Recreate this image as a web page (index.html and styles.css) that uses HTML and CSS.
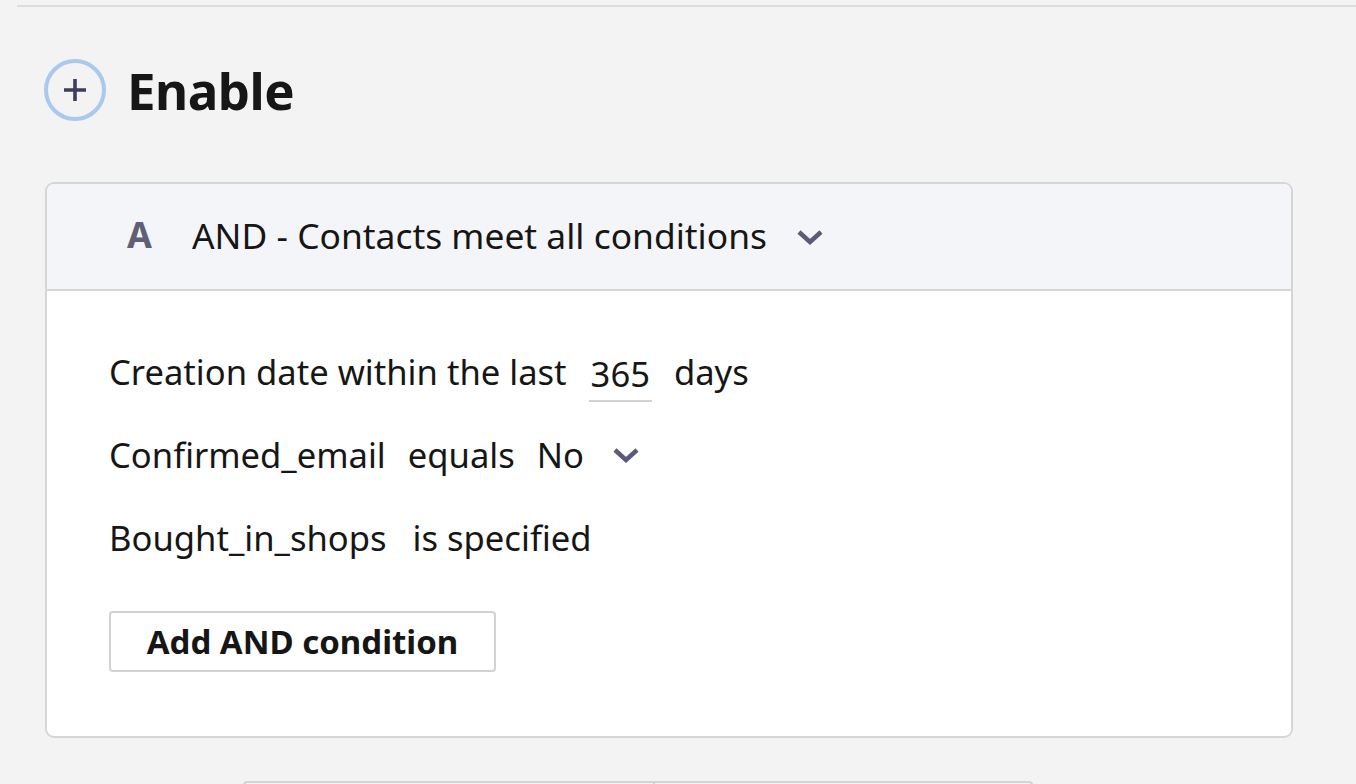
FILE: index.html
```html
<!DOCTYPE html>
<html>
<head>
<meta charset="utf-8">
<link rel="stylesheet" href="styles.css">
</head>
<body>
<div class="page">
  <div class="topline"></div>
  <div class="enable">
    <div class="plus-circle">
      <svg width="26" height="26" viewBox="0 0 26 26"><path d="M13 2v22M2 13h22" stroke="#3d3d5e" stroke-width="3.6" fill="none"/></svg>
    </div>
    <h1 class="enable-title">Enable</h1>
  </div>
  <div class="card">
    <div class="card-header">
      <span class="letter">A</span>
      <span class="header-text">AND - Contacts meet all conditions</span>
      <svg class="chev" width="28" height="16" viewBox="0 0 28 16"><path d="M3 3l11 10 11-10" stroke="#5b5a7a" stroke-width="4.5" fill="none"/></svg>
    </div>
    <div class="card-body">
      <div class="row">
        <span>Creation date within the last</span>
        <span class="num">365</span>
        <span>days</span>
      </div>
      <div class="row">
        <span>Confirmed_email</span>
        <span>equals</span>
        <span>No</span>
        <svg class="chev small" width="28" height="16" viewBox="0 0 28 16"><path d="M3 3l11 10 11-10" stroke="#5b5a7a" stroke-width="4.5" fill="none"/></svg>
      </div>
      <div class="row">
        <span>Bought_in_shops</span>
        <span class="spec">is specified</span>
      </div>
      <button class="add-btn">Add AND condition</button>
    </div>
  </div>
  <div class="bottom-btns">
    <div class="bbtn"></div>
    <div class="bbtn right"></div>
  </div>
</div>
</body>
</html>
```
FILE: styles.css
```css
html, body {
  margin: 0;
  padding: 0;
  background: #f3f3f3;
  font-family: "Noto Sans", "Open Sans", sans-serif;
  color: #161616;
  overflow: hidden;
  height: 784px;
}
.page {
  padding-top: 5px;
}
.topline {
  margin-left: 17px;
  height: 2px;
  background: #dddddd;
}
.enable {
  display: flex;
  align-items: center;
  margin: 52px 0 0 44px;
  height: 62px;
}
.plus-circle {
  width: 54px;
  height: 54px;
  border: 4px solid #a9c9ee;
  border-radius: 50%;
  display: flex;
  align-items: center;
  justify-content: center;
}
.enable-title {
  margin: 0 0 0 21px;
  font-size: 51px;
  font-weight: 700;
  line-height: 62px;
  letter-spacing: -0.5px;
}
.card {
  margin: 61px 0 0 45px;
  width: 1244px;
  height: 552px;
  border: 2px solid #d6d6d6;
  border-radius: 9px;
  background: #ffffff;
  overflow: hidden;
}
.card-header {
  height: 105px;
  background: #f4f5f8;
  border-bottom: 2px solid #d6d6d6;
  display: flex;
  align-items: center;
  padding-left: 80px;
}
.letter {
  font-size: 36px;
  font-weight: 700;
  color: #5f6075;
  width: 65px;
  margin-bottom: 4px;
}
.header-text {
  font-size: 35.4px;
  font-weight: 400;
  color: #161616;
  margin-bottom: 4px;
}
.chev {
  margin-left: 29px;
  margin-top: 0;
}
.card-body {
  padding: 39px 0 0 62px;
}
.row {
  display: flex;
  align-items: center;
  gap: 22px;
  height: 83px;
  font-size: 34.6px;
  margin-top: -16px;
  margin-bottom: 16px;
}
.row:first-child {
  margin-top: 0;
}
.num {
  border-bottom: 2px solid #d2d2d2;
  padding: 0 2px 3px;
  margin-top: 8px;
}
.spec {
  margin-left: 4px;
}
.chev.small {
  margin-left: 6px;
}
.add-btn {
  margin-top: 16px;
  width: 387px;
  height: 61px;
  border: 2px solid #d2d2d2;
  border-radius: 4px;
  background: #ffffff;
  font-family: inherit;
  font-size: 33px;
  font-weight: 700;
  color: #161616;
  padding: 0;
}
.bottom-btns {
  display: flex;
  margin: 43px 0 0 243px;
}
.bbtn {
  width: 408px;
  height: 30px;
  border: 2px solid #d4d4d4;
  border-right: none;
  border-radius: 4px 0 0 0;
}
.bbtn.right {
  width: 376px;
  border: 2px solid #d4d4d4;
  border-radius: 0 4px 0 0;
}
```
